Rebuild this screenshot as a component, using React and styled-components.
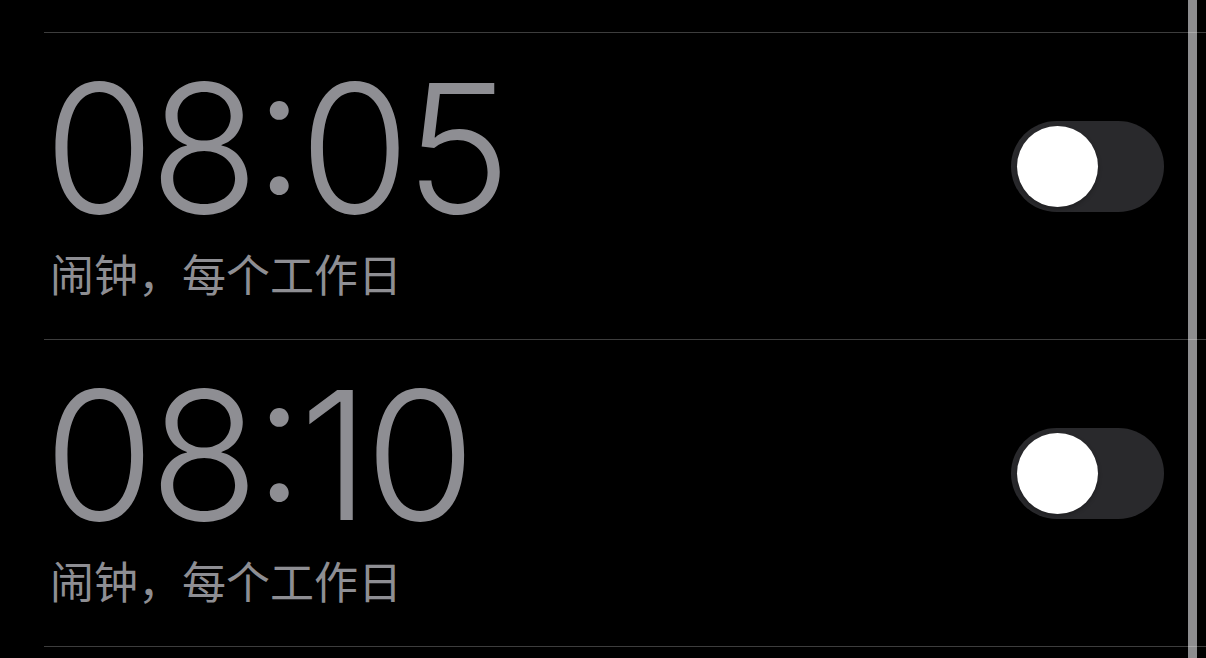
import React from "react";
import styled, { createGlobalStyle } from "styled-components";

const GlobalStyle = createGlobalStyle`
  html, body {
    margin: 0;
    padding: 0;
    background: #000;
  }
  body {
    font-family: Inter, "Noto Sans CJK SC", sans-serif;
    -webkit-font-smoothing: antialiased;
  }
`;

const Screen = styled.div`
  position: relative;
  width: 1206px;
  height: 658px;
  overflow: hidden;
  background: #000;
`;

/* thin scroll rail along the right side */
const ScrollRail = styled.div`
  position: absolute;
  top: 0;
  bottom: 0;
  left: 1188px;
  width: 9px;
  background: #8d8d8f;
  z-index: 0;
`;

const AlarmList = styled.ul`
  position: relative;
  z-index: 1;
  list-style: none;
  margin: 0;
  padding: 32px 0 0 44px;
`;

const AlarmRow = styled.li`
  display: flex;
  align-items: flex-start;
  justify-content: space-between;
  height: 306px;
  border-top: 1px solid rgba(255, 255, 255, 0.24);
  &:last-child {
    border-bottom: 1px solid rgba(255, 255, 255, 0.24);
  }
`;

const AlarmInfo = styled.div`
  display: flex;
  flex-direction: column;
  padding-top: 45px;
`;

const Time = styled.div`
  font-family: Inter, "Liberation Sans", sans-serif;
  font-weight: 275;
  font-size: 179px;
  line-height: 140px;
  letter-spacing: -5px;
  font-feature-settings: "case" 1;
  color: #8e8e93;
  white-space: nowrap;
`;

const Label = styled.div`
  margin: 33px 0 0 6px;
  font-family: "Noto Sans CJK SC", sans-serif;
  font-weight: 400;
  font-size: 44px;
  line-height: 44px;
  color: #8e8e93;
  white-space: nowrap;
`;

const Track = styled.button`
  position: relative;
  flex: none;
  width: 153px;
  height: 91px;
  margin: 88px 42px 0 0;
  padding: 0;
  border: none;
  border-radius: 46px;
  background: ${(p) => (p.$on ? "#34c759" : "#29292c")};
  cursor: pointer;
`;

const Knob = styled.span`
  position: absolute;
  top: 5px;
  left: ${(p) => (p.$on ? "67px" : "6px")};
  width: 81px;
  height: 81px;
  border-radius: 50%;
  background: #fff;
  box-shadow: 0 2px 4px rgba(0, 0, 0, 0.25);
`;

const alarms = [
  { time: "08:05", label: "闹钟，每个工作日", on: false },
  { time: "08:10", label: "闹钟，每个工作日", on: false },
];

function Switch({ on }) {
  return (
    <Track $on={on} role="switch" aria-checked={on}>
      <Knob $on={on} />
    </Track>
  );
}

export default function App() {
  return (
    <>
      <GlobalStyle />
      <Screen>
        <ScrollRail />
        <AlarmList>
          {alarms.map((a, i) => (
            <AlarmRow key={i}>
              <AlarmInfo>
                <Time>{a.time}</Time>
                <Label>{a.label}</Label>
              </AlarmInfo>
              <Switch on={a.on} />
            </AlarmRow>
          ))}
        </AlarmList>
      </Screen>
    </>
  );
}
